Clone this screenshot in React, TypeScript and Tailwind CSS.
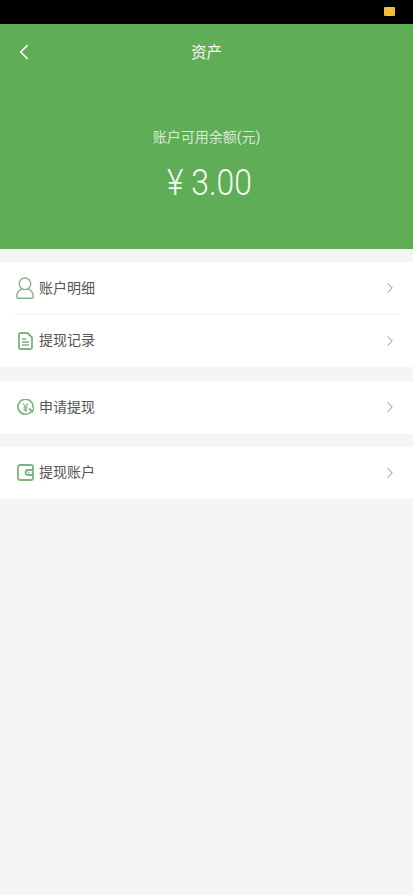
import React from "react";
import { ChevronLeft, ChevronRight } from "lucide-react";

const FONT = "font-['Roboto','Noto_Sans_CJK_SC',sans-serif]";

const UserIcon = () => (
  <svg width="18" height="22" viewBox="0 0 18 22" fill="none" stroke="#7fb585" strokeWidth="1.4">
    <circle cx="9" cy="6.800" r="5.800" />
    <path d="M5.800 11.800C3 13 .8 16 .8 19.800c0 .9.500 1.400 1.300 1.400h13.800c.8 0 1.300-.5 1.300-1.400 0-3.800-2.200-6.800-5-8" strokeLinejoin="round" />
  </svg>
);

const DocIcon = () => (
  <svg width="15" height="18" viewBox="0 0 15 18" fill="none" stroke="#7ab582" strokeWidth="1.800" className="ml-[2px]">
    <path d="M2.500 1h7l4.500 4.500v10c0 .9-.6 1.500-1.500 1.500h-10c-.9 0-1.500-.6-1.500-1.500v-13c0-.9.6-1.500 1.500-1.500z" strokeLinejoin="round" />
    <path d="M4 7h4M4 10h7M4 13h7" strokeWidth="1.500" />
  </svg>
);

const WithdrawIcon = () => (
  <svg width="17" height="17" viewBox="0 0 18 18" fill="none" stroke="#7ab582" strokeWidth="1.800" className="ml-px">
    <path d="M15 13.500A8 8 0 1 1 17 9" strokeLinecap="round" />
    <path d="M13.500 10.500l2.500 3 2-3.500" strokeLinecap="round" />
    <path d="M6.500 4.500l2.500 4 2.500-4M9 8.500V14M6.800 9.500h4.400M6.800 11.500h4.400" strokeWidth="1.300" />
  </svg>
);

const WalletIcon = () => (
  <svg width="17" height="17" viewBox="0 0 17 17" fill="none" stroke="#7ab582" strokeWidth="1.800" className="ml-px">
    <rect x="1" y="1" width="15" height="15" rx="2" />
    <path d="M16 6h-5a2.500 2.500 0 0 0 0 5h5" />
    <circle cx="11.500" cy="8.500" r=".9" fill="#7ab582" stroke="none" />
  </svg>
);

const Row = ({
  icon,
  label,
  divider,
}: {
  icon: React.ReactNode;
  label: string;
  divider?: boolean;
}) => (
  <div className="relative flex h-[52.500px] items-center pr-4 pl-4">
    <div className="flex w-[23px] shrink-0 items-center justify-start">{icon}</div>
    <span className="text-[14px] text-[#555555]">{label}</span>
    <ChevronRight size={18} strokeWidth={1.300} className="mr-[-2px] ml-auto text-[#8c8c8c]" />
    {divider && <div className="absolute right-[15px] bottom-0 left-[15px] h-px bg-[#f0f0f0]" />}
  </div>
);

export default function App() {
  return (
    <div className={`flex h-[895px] w-[413px] flex-col overflow-hidden bg-[#f5f5f5] ${FONT}`}>
      <div className="flex h-6 shrink-0 items-center justify-end bg-black pr-[18px]">
        <div className="mb-[2px] h-[9px] w-[11px] rounded-[1px] bg-[#f4bd35]" />
      </div>

      <div className="flex h-[225px] shrink-0 flex-col bg-[#5fad56] text-white">
        <div className="relative flex h-[56px] items-center justify-center">
          <ChevronLeft size={26} strokeWidth={1.500} className="absolute top-[15px] left-[11px]" />
          <span className="pt-[4px] text-[15.500px] text-[#f2f7f1]">资产</span>
        </div>
        <div className="mt-[47px] text-center text-[14px] leading-5 text-[#d9ebd6]">账户可用余额(元)</div>
        <div className="mt-[15px] flex translate-x-[3px] scale-x-[.86] justify-center text-[37px] leading-[42px] font-light text-[#f4f9f3]">¥ 3.00</div>
      </div>

      <div className="mt-[13px] bg-white">
        <Row icon={<UserIcon />} label="账户明细" divider />
        <Row icon={<DocIcon />} label="提现记录" />
      </div>
      <div className="mt-[14px] bg-white">
        <Row icon={<WithdrawIcon />} label="申请提现" />
      </div>
      <div className="mt-[13px] bg-white">
        <Row icon={<WalletIcon />} label="提现账户" />
      </div>
    </div>
  );
}
